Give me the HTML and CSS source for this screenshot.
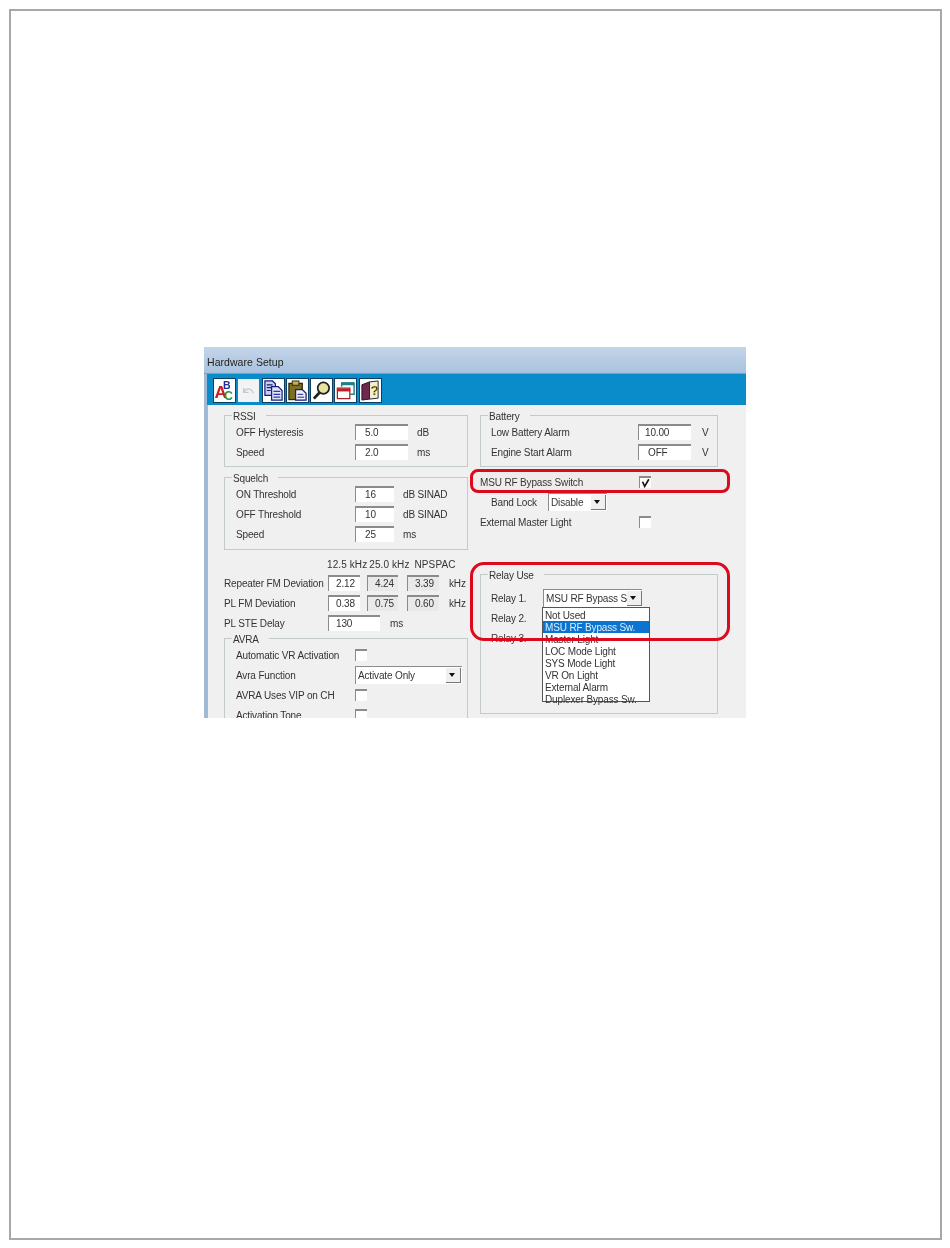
FILE: index.html
```html
<!DOCTYPE html>
<html lang="en">
<head>
<meta charset="utf-8">
<title>Hardware Setup</title>
<link rel="stylesheet" href="styles.css">
</head>
<body>
<div class="page">
  <div class="window">
    <div class="titlebar">Hardware Setup</div>
    <div class="toolbar">
      <span class="tool"><svg viewBox="0 0 22 24"><text x="0.500" y="20" class="ic-a">A</text><text x="9.500" y="10" class="ic-b">B</text><text x="10.500" y="22" class="ic-c">C</text></svg></span>
      <span class="tool tool-off"><svg viewBox="0 0 22 24"><path d="M6 9 L6 14 L11 14 M6 13.500 C9 9 14 9 16 15" fill="none" stroke="#c4c8cc" stroke-width="1.400"/></svg></span>
      <span class="tool"><svg viewBox="0 0 22 24"><path d="M2 2h8l3 3v12H2z" fill="#c9d0ee" stroke="#1a1a80" stroke-width="1.300"/><path d="M4 6h6M4 9h6M4 12h4" stroke="#1a1a80" stroke-width="1.300"/><path d="M9 8h7l4 4v10H9z" fill="#dfe4f6" stroke="#1a1a80" stroke-width="1.300"/><path d="M11 13h7M11 16h7M11 19h7" stroke="#2a3aa8" stroke-width="1.300"/></svg></span>
      <span class="tool"><svg viewBox="0 0 22 24"><rect x="2" y="4.500" width="14" height="17" fill="#7d6f22" stroke="#2c280c" stroke-width="1.300"/><rect x="5.500" y="2" width="7" height="4.500" fill="#c9b04a" stroke="#2c280c"/><path d="M9 11h7l4 4v7H9z" fill="#eef0fa" stroke="#1a1a80" stroke-width="1.300"/><path d="M11 16h6M11 19h7" stroke="#1a1a80"/></svg></span>
      <span class="tool"><svg viewBox="0 0 22 24"><circle cx="13" cy="9.500" r="6" fill="#e6e2a0" stroke="#222" stroke-width="1.800"/><path d="M9 14 L3 20.500" stroke="#222" stroke-width="3"/></svg></span>
      <span class="tool"><svg viewBox="0 0 22 24"><path d="M7 8V4h13v12h-4" fill="none" stroke="#1f7f8a" stroke-width="1.500"/><path d="M7 5h13" stroke="#1f7f8a" stroke-width="3"/><rect x="2.500" y="9.500" width="13" height="11" fill="#fff" stroke="#a82020" stroke-width="1.300"/><path d="M2 11.500h14" stroke="#c02020" stroke-width="3"/></svg></span>
      <span class="tool"><svg viewBox="0 0 22 24"><path d="M2 6 L10 3 V21 L2 22z" fill="#6e2a4e" stroke="#22101c"/><path d="M10 3l9-1v18l-9 1z" fill="#f2f0d8" stroke="#22222a"/><text x="11" y="17" class="ic-q">?</text></svg></span>
    </div>
    <div class="body">
      <div class="col">
        <div class="group">
          <div class="legend">RSSI</div>
          <div class="rows">
            <div class="row"><span class="label w-119">OFF Hysteresis</span><span class="input w-53">5.0</span><span class="unit">dB</span></div>
            <div class="row"><span class="label w-119">Speed</span><span class="input w-53">2.0</span><span class="unit">ms</span></div>
          </div>
        </div>
        <div class="group group-next">
          <div class="legend">Squelch</div>
          <div class="rows rows-tall">
            <div class="row"><span class="label w-119">ON Threshold</span><span class="input w-39">16</span><span class="unit">dB SINAD</span></div>
            <div class="row"><span class="label w-119">OFF Threshold</span><span class="input w-39">10</span><span class="unit">dB SINAD</span></div>
            <div class="row"><span class="label w-119">Speed</span><span class="input w-39">25</span><span class="unit">ms</span></div>
          </div>
        </div>
        <div class="dev-head"><span>12.5 kHz</span><span>25.0 kHz</span><span>NPSPAC</span></div>
        <div class="dev">
          <div class="row"><span class="label w-104">Repeater FM Deviation</span><span class="input w-32">2.12</span><span class="input w-31 off">4.24</span><span class="input w-32 off">3.39</span><span class="unit">kHz</span></div>
          <div class="row"><span class="label w-104">PL FM Deviation</span><span class="input w-32">0.38</span><span class="input w-31 off">0.75</span><span class="input w-32 off">0.60</span><span class="unit">kHz</span></div>
          <div class="row"><span class="label w-104">PL STE Delay</span><span class="input w-52">130</span><span class="unit">ms</span></div>
        </div>
        <div class="group group-avra">
          <div class="legend">AVRA</div>
          <div class="rows">
            <div class="row"><span class="label w-119">Automatic VR Activation</span><span class="check"></span></div>
            <div class="row"><span class="label w-119">Avra Function</span><span class="combo w-107"><span class="combo-text">Activate Only</span><span class="arrow"></span></span></div>
            <div class="row"><span class="label w-119">AVRA Uses VIP on CH</span><span class="check"></span></div>
            <div class="row"><span class="label w-119">Activation Tone</span><span class="check"></span></div>
          </div>
        </div>
      </div>
      <div class="col">
        <div class="group group-r">
          <div class="legend">Battery</div>
          <div class="rows">
            <div class="row"><span class="label w-147">Low Battery Alarm</span><span class="input w-53 pad-s">10.00</span><span class="unit unit-v">V</span></div>
            <div class="row"><span class="label w-147">Engine Start Alarm</span><span class="input w-53">OFF</span><span class="unit unit-v">V</span></div>
          </div>
        </div>
        <div class="options">
          <div class="row"><span class="label w-159">MSU RF Bypass Switch</span><span class="check"><svg viewBox="0 0 12 12"><path d="M2.500 4.500 L5 10 L10 1.500" fill="none" stroke="#111" stroke-width="2"/></svg></span></div>
          <div class="row row-in"><span class="label w-57">Band Lock</span><span class="combo w-59"><span class="combo-text">Disable</span><span class="arrow"></span></span></div>
          <div class="row"><span class="label w-159">External Master Light</span><span class="check"></span></div>
        </div>
        <div class="group group-r group-relay">
          <div class="legend">Relay Use</div>
          <div class="rows rows-relay">
            <div class="row"><span class="label w-52">Relay 1.</span>
              <span class="combo w-99"><span class="combo-text">MSU RF Bypass S</span><span class="arrow"></span>
                <span class="list">
                  <span class="item">Not Used</span>
                  <span class="item item-on">MSU RF Bypass Sw.</span>
                  <span class="item">Master Light</span>
                  <span class="item">LOC Mode Light</span>
                  <span class="item">SYS Mode Light</span>
                  <span class="item">VR On Light</span>
                  <span class="item">External Alarm</span>
                  <span class="item">Duplexer Bypass Sw.</span>
                </span>
              </span>
            </div>
            <div class="row"><span class="label w-52">Relay 2.</span></div>
            <div class="row"><span class="label w-52">Relay 3.</span></div>
          </div>
        </div>
      </div>
    </div>
    <div class="mark mark-switch"></div>
    <div class="mark mark-relay"></div>
  </div>
</div>
</body>
</html>
```
FILE: styles.css
```css
* { box-sizing: border-box; }
html, body { margin: 0; padding: 0; background: #fff; }
.page {
  width: 933px;
  height: 1231px;
  margin: 9px 0 0 9px;
  padding: 336px 0 0 193px;
  border: 2px solid #a8a8a8;
}
.window {
  position: relative;
  width: 542px;
  height: 371px;
  overflow: hidden;
  display: flex;
  flex-direction: column;
  font: 10px/12px "Liberation Sans", Arial, sans-serif;
  letter-spacing: -0.15px;
  color: #333;
  filter: blur(0.3px);
}
.titlebar {
  flex: none;
  height: 27px;
  padding: 9px 0 0 3px;
  background: linear-gradient(#c4d5e9, #a9c2de);
  border-bottom: 1px solid #8d9ba8;
  font-size: 10.500px;
  letter-spacing: 0.05px;
  color: #222;
}
.toolbar {
  flex: none;
  height: 31px;
  padding: 5px 0 0 7px;
  display: flex;
  gap: 3.300px;
  background: #0a8ccb;
  border-left: 3px solid #a0bad6;
}
.tool {
  width: 21px;
  height: 23px;
  background: #fff;
  box-shadow: 0 0 0 1px #0b3f63;
}
.tool-off { box-shadow: none; background: #f1f3f5; }
.tool svg { display: block; width: 21px; height: 23px; }
.ic-a { font: bold 18px "Liberation Sans", sans-serif; fill: #c81e1e; }
.ic-b { font: bold 11px "Liberation Sans", sans-serif; fill: #1f2f9a; }
.ic-c { font: bold 13px "Liberation Sans", sans-serif; fill: #1e9a3a; }
.ic-q { font: bold 14px "Liberation Sans", sans-serif; fill: #2c2c2c; stroke: #e8c820; stroke-width: 0.400px; }
.body {
  flex: 1;
  display: grid;
  grid-template-columns: 244px 238px;
  column-gap: 12px;
  align-content: start;
  padding: 10px 0 0 16px;
  background: #f0f0f0;
  border-left: 4px solid #a0bad6;
}
.group {
  border: 1px solid #c3cbc9;
  padding: 0 0 0 11px;
}
.group-r { padding-left: 10px; }
.group-next { margin-top: 10px; }
.legend {
  width: fit-content;
  height: 12px;
  margin: -7px 0 0 -4px;
  padding: 0 10px 0 1px;
  background: #f0f0f0;
  line-height: 16px;
}
.group-r .legend { margin-left: -3px; }
.rows { padding: 1px 0 4px; }
.rows-tall { padding-bottom: 5px; }
.rows-relay { padding: 8px 0 0; }
.group-relay { margin-top: 42px; height: 140px; }
.group-avra { margin-top: 5px; }
.row {
  height: 20px;
  display: flex;
  align-items: center;
  white-space: nowrap;
}
.row-in { padding-left: 11px; }
.label { flex: none; padding-top: 2px; }
.w-119 { width: 119px; }
.w-104 { width: 104px; }
.w-147 { width: 147px; }
.w-159 { width: 159px; }
.w-57 { width: 57px; }
.w-52 { width: 52px; }
.input {
  flex: none;
  height: 16px;
  padding: 1px 0 0 9px;
  background: #fff;
  border-top: 2px solid #8b8b8b;
  border-left: 1px solid #8b8b8b;
  line-height: 11px;
}
.input.w-53 { width: 53px; }
.input.w-52 { width: 52px; }
.input.w-39 { width: 39px; }
.input.w-32 { width: 32px; }
.input.w-31 { width: 31px; }
.input.off { background: #e9e9e9; margin-left: 7px; }
.input.off + .input.off { margin-left: 9px; }
.input.pad-s { padding-left: 6px; }
.dev .input { padding-left: 7px; }
.unit { margin-left: 9px; padding-top: 1px; }
.dev .unit { margin-left: 10px; }
.unit-v { margin-left: 11px; }
.dev-head {
  height: 14px;
  margin-top: 7px;
  padding-left: 103px;
  display: flex;
  gap: 2px;
  line-height: 16px;
  letter-spacing: 0.1px;
}
.dev-head span:last-child { margin-left: 3px; }
.dev { margin-top: 2px; }
.check {
  flex: none;
  width: 12px;
  height: 12px;
  background: #fff;
  border-top: 2px solid #8b8b8b;
  border-left: 1px solid #8b8b8b;
}
.check svg { display: block; width: 11px; height: 10px; }
.combo {
  flex: none;
  position: relative;
  height: 18px;
  display: flex;
  align-items: center;
  justify-content: space-between;
  background: #fff;
  border-top: 1px solid #8b8b8b;
  border-left: 1px solid #8b8b8b;
}
.w-107 { width: 107px; }
.w-59 { width: 59px; }
.w-99 { width: 99px; }
.combo-text { padding: 1px 0 0 2px; }
.arrow {
  position: relative;
  flex: none;
  width: 15px;
  height: 15px;
  margin-right: 1px;
  background: #f0f0f0;
  border-right: 1px solid #777;
  border-bottom: 1px solid #777;
}
.arrow::after {
  content: "";
  position: absolute;
  left: 3px;
  top: 5px;
  border: 3.500px solid transparent;
  border-top: 4px solid #111;
  border-bottom-width: 0;
}
.options { margin-top: 5px; }
.list {
  position: absolute;
  left: -2px;
  top: 17px;
  z-index: 2;
  width: 108px;
  height: 95px;
  padding: 1px 0 0;
  display: block;
  background: #fff;
  border: 1px solid #555;
}
.item {
  display: block;
  height: 12px;
  padding-left: 2px;
  line-height: 14px;
  color: #333;
}
.item-on { background: #0a74cf; color: #dfeefa; }
.mark {
  position: absolute;
  z-index: 3;
  left: 266px;
  width: 260px;
  border: 3px solid #dd0a1e;
  pointer-events: none;
}
.mark-switch {
  top: 122px;
  height: 24px;
  border-radius: 8px;
  background: rgba(230, 120, 130, 0.03);
}
.mark-relay {
  top: 215px;
  height: 79px;
  border-radius: 14px;
}
```
